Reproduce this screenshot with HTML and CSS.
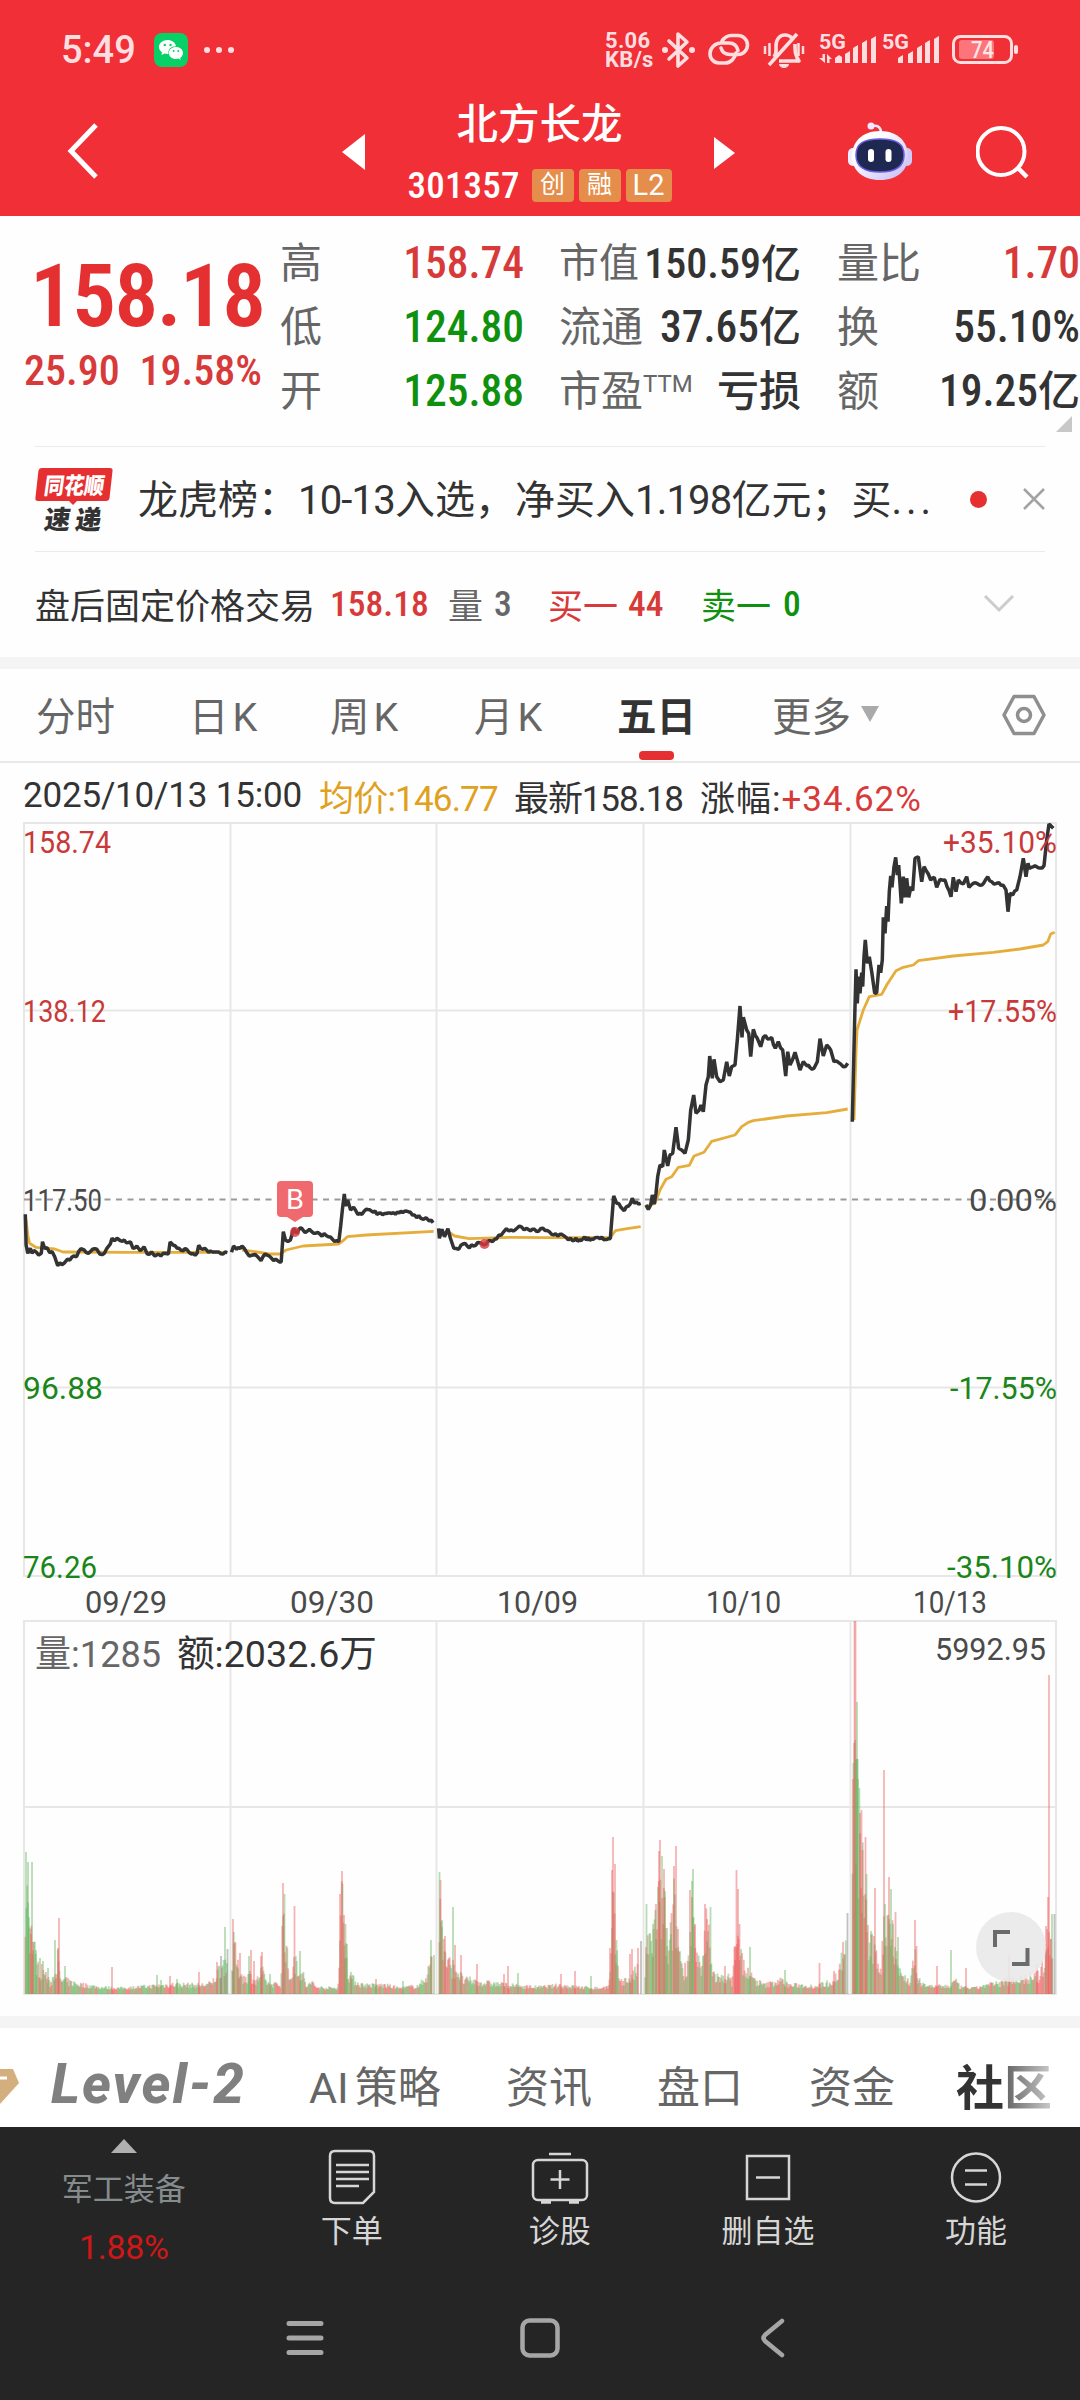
FILE: index.html
```html
<!DOCTYPE html>
<html lang="zh-CN">
<head>
<meta charset="utf-8">
<title>北方长龙 301357</title>
<link rel="stylesheet" href="styles.css">
</head>
<body>
<header class="header">
  <div class="status">
    <span class="clock">5:49</span>
    <svg class="wechat" width="34" height="34" viewBox="0 0 34 34"><rect width="34" height="34" rx="8" fill="#07d067"/><path d="M13.500 7C8.800 7 5 10 5 14c0 2.200 1.200 4 3 5.300L7.500 22l3-1.500c1 .3 2 .4 3 .4h1C13.600 16 17.500 13 22 13.200 21.300 9.500 17.800 7 13.500 7z" fill="#fff"/><path d="M22 14c-4 0-7.200 2.600-7.200 6s3.200 6 7.200 6c.8 0 1.700-.1 2.400-.4l2.300 1.300-.6-2c1.800-1.100 2.900-2.900 2.900-4.900 0-3.400-3.100-6-7-6z" fill="#fff"/><g fill="#07d067"><circle cx="10.800" cy="12" r="1.200"/><circle cx="16.500" cy="12" r="1.200"/><circle cx="19.700" cy="18" r="1"/><circle cx="24.300" cy="18" r="1"/></g></svg>
    <svg class="dots" width="30" height="6" viewBox="0 0 30 6"><g fill="#ffe0e2"><circle cx="3" cy="3" r="3"/><circle cx="15" cy="3" r="3"/><circle cx="27" cy="3" r="3"/></g></svg>
    <div class="speed"><span>5.06</span><span>KB/s</span></div>
    <svg class="status-icons" width="364" height="40" viewBox="658 30 364 40" fill="none" stroke="#ffdee0" stroke-width="3.600">
      <path d="M670 41l18 17-9 8V34l9 8-18 17" stroke-linejoin="round" stroke-linecap="round"/>
      <g fill="#ffdee0" stroke="none"><circle cx="666" cy="50" r="3"/><circle cx="693" cy="50" r="3"/></g>
      <path d="M722 43h8c6 0 8 3 9 7.500M737 53c-1 5-5 10-11 10h-6c-5 0-9-4-9-9.500S716 43 722 43M723 41c2-3 6-5.500 9-5.500h7c5 0 9.500 4 9.500 9.500s-4.500 9.500-9.500 9.500h-8c-5 0-8-3-9-6.500" stroke-linecap="round"/>
      <path d="M770 65l28-31M775 57c3-4 2-6 2-11 0-7 4-11 9-11 3 0 5 1 7 3M796 44c0 7 0 11 4 17h-20" stroke-linejoin="round"/>
      <path d="M780 64h10a5 4 0 0 1-10 0z" fill="#ffdee0" stroke="none"/>
      <path d="M766 46v8M770.500 43v13M799.500 43v13M804 46v8" stroke-width="2.500"/>
      <g fill="#ffdee0" stroke="none">
        <path d="M836 63v-5l4-3 3 2v6zM846 54l5-3v12h-5zM854 48l5-3v18h-5zM863 43l5-3v23h-5zM872 39l5-3v27h-5z"/>
        <path d="M899 63v-5l5-3v8zM909 54l5-3v12h-5zM918 48l5-3v18h-5zM926 43l5-3v23h-5zM935 39l5-3v27h-5z"/>
        <path d="M823.500 54h2.500v9l-6-5h3.500zM828 54l5 5h-2.500v4H828z"/>
        <text x="820" y="49" class="net" textLength="27" lengthAdjust="spacingAndGlyphs">5G</text>
        <text x="883" y="49" class="net" textLength="27" lengthAdjust="spacingAndGlyphs">5G</text>
        <rect x="960" y="40" width="35" height="19" rx="3" fill="#ff8d92" fill-opacity=".75"/>
        <rect x="1015" y="45" width="4" height="9" rx="2"/>
        <text x="972" y="58" class="batt" textLength="23" lengthAdjust="spacingAndGlyphs">74</text>
      </g>
      <rect x="954.500" y="36.500" width="58" height="26" rx="7" stroke-width="3"/>
    </svg>
  </div>
  <div class="titlebar">
    <svg class="back" width="32" height="58" viewBox="0 0 32 58"><path d="M29 3L4 29l25 26" fill="none" stroke="#fff" stroke-width="5"/></svg>
    <svg class="prev" width="23" height="36" viewBox="0 0 23 36"><path d="M23 0v36L0 18z" fill="#fff"/></svg>
    <div class="stock">
      <h1>北方长龙</h1>
      <div class="code"><span class="digits">301357</span><i class="tag">创</i><i class="tag">融</i><i class="tag wide">L2</i></div>
    </div>
    <svg class="next" width="21" height="32" viewBox="0 0 21 32"><path d="M0 0v32l21-16z" fill="#fff"/></svg>
    <svg class="robot" width="64" height="60" viewBox="0 0 64 60">
      <defs><linearGradient id="shell" x1="0" y1="0" x2="1" y2="1"><stop offset=".3" stop-color="#fff"/><stop offset="1" stop-color="#c3b8f4"/></linearGradient></defs>
      <path d="M24 4c6-1 9 1 9 7" fill="none" stroke="#ece8ff" stroke-width="2.500"/><circle cx="23" cy="4" r="3.500" fill="#efeaff"/>
      <rect x="0" y="26" width="10" height="18" rx="5" fill="#efedff"/><rect x="54" y="26" width="10" height="18" rx="5" fill="#d0c9fa"/>
      <path d="M32 9c18 0 28 11 28 25S50 58 32 58 4 48 4 34 14 9 32 9z" fill="url(#shell)"/>
      <path d="M32 17c17 0 24 5 24 16s-7 17-24 17S8 44 8 33s7-16 24-16z" fill="#1e2850" stroke="#6a5ce0" stroke-width="1.500"/>
      <rect x="20" y="27" width="6" height="13" rx="3" fill="#fff"/><rect x="37.500" y="27" width="6" height="13" rx="3" fill="#fff"/>
    </svg>
    <svg class="search" width="54" height="54" viewBox="0 0 54 54"><circle cx="25" cy="25.500" r="23.500" fill="none" stroke="#fff" stroke-width="4"/><path d="M42 42l9 9" stroke="#fff" stroke-width="4.500"/></svg>
  </div>
</header>

<section class="quote">
  <div class="price">
    <strong>158.18</strong>
    <div class="change"><span>25.90</span><span>19.58%</span></div>
  </div>
  <dl class="stats first">
    <dt>高</dt><dd class="up">158.74</dd>
    <dt>低</dt><dd class="down">124.80</dd>
    <dt>开</dt><dd class="down">125.88</dd>
  </dl>
  <dl class="stats second">
    <dt class="small">市值</dt><dd class="small">150.59<b>亿</b></dd>
    <dt>流通</dt><dd>37.65<b>亿</b></dd>
    <dt>市盈<sup>TTM</sup></dt><dd><b>亏损</b></dd>
  </dl>
  <dl class="stats third">
    <dt>量比</dt><dd class="up">1.70</dd>
    <dt>换</dt><dd>55.10%</dd>
    <dt>额</dt><dd>19.25<b>亿</b></dd>
  </dl>
  <i class="corner"></i>
</section>

<section class="news">
  <svg class="logo" width="78" height="65" viewBox="0 0 78 65">
    <path d="M7 1h68q3 0 2.500 3l-3 27q-.5 3-3.500 3H42l-4 4-4-4H3q-3 0-2.600-3l3-27Q4 1 7 1z" fill="#e52f31"/>
    <g transform="skewX(-8)"><text x="12" y="27" class="logo-top" textLength="60" lengthAdjust="spacingAndGlyphs">同花顺</text>
    <text x="17" y="62" class="logo-bottom" textLength="57" lengthAdjust="spacing">速递</text></g>
  </svg>
  <p>龙虎榜：<span>10-13</span>入选，净买入<span>1.198</span>亿元；买<span class="more-dots">...</span></p>
  <i class="dot"></i>
  <svg class="close" width="22" height="22" viewBox="0 0 22 22"><path d="M1 1l20 20M21 1L1 21" stroke="#a3a3a3" stroke-width="2.500"/></svg>
</section>

<section class="fixed-price">
  <span class="label">盘后固定价格交易</span><span class="n up a">158.18</span>
  <span class="gray b">量</span><span class="n gray c">3</span>
  <span class="up d">买一</span><span class="n up e">44</span>
  <span class="down f">卖一</span><span class="n down g">0</span>
  <svg class="chev" width="32" height="18" viewBox="0 0 32 18"><path d="M2 1l14 14L30 1" fill="none" stroke="#ccc" stroke-width="3"/></svg>
</section>

<nav class="periods">
  <span class="p1">分时</span><span class="p2">日<em>K</em></span><span class="p3">周<em>K</em></span><span class="p4">月<em>K</em></span><span class="p5 active">五日</span><span class="p6">更多</span><i class="caret"></i>
  <svg class="gear" width="44" height="42" viewBox="0 0 44 42" fill="none" stroke="#8f8f8f" stroke-width="3.500"><path d="M12 2.500h20L42 21 32 39.500H12L2 21z" stroke-linejoin="round"/><circle cx="22" cy="21" r="6.500"/></svg>
</nav>

<section class="chart-info">
  <span class="i1">2025/10/13 15:00</span><span class="i2">均价:146.77</span><span class="i3">最新158.18</span><span class="i4">涨幅:<em>+34.62%</em></span>
</section>

<section class="charts">
  <svg id="chart" width="1080" height="1195" viewBox="0 821 1080 1195">
    <g class="grid" id="grid"></g>
    <path d="M24 1199.500H1055" stroke="#999" stroke-width="2" stroke-dasharray="6 5.500"/>
    <g id="volume"></g>
    <g id="lines"></g>
    <circle cx="295" cy="1232" r="5" fill="#d93840" fill-opacity=".8"/><circle cx="484.500" cy="1244" r="5" fill="#d93840" fill-opacity=".8"/>
    <path d="M281 1181h28q4 0 4 4v28q0 4-4 4h-6l-8 5-8-5h-6q-4 0-4-4v-28q0-4 4-4z" fill="#f0696e"/>
    <text x="286" y="1209" class="mark" textLength="18" lengthAdjust="spacingAndGlyphs">B</text>
    <g class="axis" id="axis"></g>
    <text x="35" y="1667" class="vol muted" textLength="126" lengthAdjust="spacingAndGlyphs">量:1285</text>
    <text x="177" y="1667" class="vol" textLength="200" lengthAdjust="spacingAndGlyphs">额:2032.6万</text>
    <circle cx="1011" cy="1947" r="35" fill="#e9e9e9" fill-opacity=".9"/>
    <path d="M995 1947v-15h15M1012 1964h15.500v-16" fill="none" stroke="#6b6b6b" stroke-width="4"/>
  </svg>
</section>

<nav class="sections">
  <svg class="gem" width="20" height="36" viewBox="0 0 20 36"><path d="M0 1h13l6 14L0 36z" fill="#d4af7e"/><path d="M0 10h7" stroke="#fff" stroke-width="3"/></svg>
  <span class="level">Level-2</span><span class="s1">AI<b>策略</b></span><span class="s2">资讯</span><span class="s3">盘口</span><span class="s4">资金</span><span class="s5">社区</span>
</nav>

<footer class="toolbar">
  <div class="sector"><i class="tri"></i><span>军工装备</span><em>1.88%</em></div>
  <div class="tool"><svg width="60" height="58" viewBox="0 0 60 58" fill="none" stroke="#d6d6d6" stroke-width="2.500"><path d="M13 3h34q5 0 5 5v36L41 55H13q-5 0-5-5V8q0-5 5-5z"/><path d="M14 17h33M14 24h33M14 31h33M14 38h23"/></svg><span>下单</span></div>
  <div class="tool"><svg width="60" height="58" viewBox="0 0 60 58" fill="none" stroke="#d6d6d6" stroke-width="2.500"><rect x="3" y="12" width="54" height="40" rx="5"/><path d="M19 6h22M30 22v19M20.500 31.500h19"/><path d="M11 54h10M39 54h10" stroke-width="3.500"/></svg><span>诊股</span></div>
  <div class="tool"><svg width="60" height="58" viewBox="0 0 60 58" fill="none" stroke="#d6d6d6" stroke-width="2.500"><path d="M9 8h42v43H9zM18 29.500h24"/></svg><span>删自选</span></div>
  <div class="tool"><svg width="60" height="58" viewBox="0 0 60 58" fill="none" stroke="#d6d6d6" stroke-width="2.500"><circle cx="30" cy="29.500" r="24"/><path d="M19 22.500h22M19 36.500h22"/></svg><span>功能</span></div>
</footer>
<div class="sysnav">
  <svg class="menu" width="38" height="36" viewBox="0 0 38 36"><path d="M3 3.500h32M3 18h32M3 32.500h32" stroke="#a6a6a6" stroke-width="5" stroke-linecap="round"/></svg>
  <svg class="home" width="40" height="40" viewBox="0 0 40 40"><rect x="2.500" y="2.500" width="35" height="35" rx="7" fill="none" stroke="#a6a6a6" stroke-width="4.500"/></svg>
  <svg class="ret" width="26" height="40" viewBox="0 0 26 40"><path d="M22 3L5 17q-3 3 0 6l17 14" fill="none" stroke="#a6a6a6" stroke-width="4.500" stroke-linecap="round"/></svg>
</div>
<script src="chart.js"></script>
</body>
</html>
```
FILE: styles.css
```css
* { box-sizing: border-box; margin: 0; padding: 0; }
body { width: 1080px; height: 2400px; overflow: hidden; background: #fefefe; color: #333; font-family: Roboto, "Noto Sans CJK SC", sans-serif; }
i, em { font-style: normal; }
svg { display: block; flex: none; }
span { white-space: nowrap; }
.up { color: #d83a3a; }
.down { color: #0f910f; }
.gray { color: #666; }

.header { height: 216px; background: #f12f37; }
.status { display: flex; align-items: center; height: 100px; padding-left: 61px; color: #ffdee0; }
.clock { width: 93px; font-size: 38px; font-weight: 500; font-stretch: 95%; }
.dots { margin-left: 16px; }
.speed { display: flex; flex-direction: column; width: 52px; margin-left: 371px; font-size: 22px; font-weight: 700; line-height: 19px; letter-spacing: .3px; }
.net { font-size: 21px; font-weight: 700; }
.batt { font-size: 24px; font-weight: 500; fill: #ffe6e8; }
.titlebar { display: flex; align-items: flex-start; height: 116px; padding-left: 67px; color: #fff; }
.back { margin-top: 22px; }
.prev { margin: 34px 0 0 243px; }
.stock { width: 349px; text-align: center; }
.stock h1 { font-size: 41.500px; font-weight: 500; line-height: 50px; }
.code { display: flex; justify-content: center; align-items: center; height: 34px; margin-top: 18px; }
.digits { width: 124px; text-align: left; font-size: 37px; font-weight: 500; font-stretch: 78%; letter-spacing: .2px; }
.tag { width: 42px; height: 33px; margin-right: 5px; border-radius: 4px; background: #e58e4b; font-size: 25px; line-height: 32px; }
.tag.wide { width: 46px; margin-right: 0; font-size: 29px; }
.next { margin-top: 37px; }
.robot { margin: 22px 0 0 113px; }
.search { margin: 26px 0 0 64px; }

.quote { position: relative; display: flex; height: 230px; padding-top: 16px; }
.price { width: 280px; color: #e53032; }
.price strong { display: block; height: 100px; margin: 4px 0 0 30px; font-size: 87px; font-weight: 600; line-height: 120px; font-stretch: 82%; letter-spacing: -1.500px; }
.change { display: flex; justify-content: space-between; width: 238px; margin-left: 24px; color: #d83a3a; font-size: 42px; font-weight: 500; font-stretch: 82%; line-height: 70px; }
.stats { display: grid; grid-template-columns: 0 1fr; grid-auto-rows: 64px; line-height: 64px; font-size: 42px; }
.stats dt { color: #666; white-space: nowrap; }
.stats dd { text-align: right; font-size: 43.500px; font-weight: 500; font-stretch: 86%; white-space: nowrap; }
.stats b { font-size: 42px; font-weight: 500; }
.stats sup { font-size: 24px; line-height: 0; vertical-align: 14px; }
.stats dt.small, .stats .small b { font-size: 40px; }
.stats dd.small { font-size: 42px; }
.first { width: 244px; }
.second { width: 242px; margin-left: 35px; }
.third { width: 243px; margin-left: 36px; }
.corner { position: absolute; left: 1056px; top: 200px; width: 0; height: 0; border: 8px solid transparent; border-right-color: #c8c8c8; border-bottom-color: #c8c8c8; }

.news { display: flex; align-items: center; height: 106px; margin: 0 35px; border: solid #ebebeb; border-width: 1px 0; font-size: 40px; }
.news p { width: 806px; margin-left: 25px; padding-bottom: 5px; white-space: nowrap; }
.news p span { letter-spacing: -.8px; }
.news .more-dots { letter-spacing: 4px; }
.logo { overflow: visible; }
.logo-top { font-size: 23px; font-weight: 900; fill: #fff; }
.logo-bottom { font-size: 26px; font-weight: 900; fill: #333; }
.dot { width: 17px; height: 17px; border-radius: 50%; background: #e52f31; margin-left: 26px; }
.close { margin-left: 36px; }

.fixed-price { display: flex; align-items: center; height: 105px; padding: 0 0 2px 35px; font-size: 35px; }
.fixed-price .n { font-size: 35.500px; font-weight: 500; font-stretch: 83%; }
.fixed-price .label { width: 295px; }
.fixed-price .a { width: 118px; } .fixed-price .b { width: 46px; } .fixed-price .c { width: 54px; }
.fixed-price .d { width: 80px; } .fixed-price .e { width: 73px; } .fixed-price .f { width: 82px; } .fixed-price .g { width: 200px; }

.periods { display: flex; align-items: center; height: 106px; padding: 0 0 3px 36px; border-top: 12px solid #f4f4f4; border-bottom: 2px solid #e8e8e8; color: #666; font-size: 39.500px; }
.periods em { margin-left: 4px; }
.p1 { width: 153px; } .p2 { width: 141px; } .p3 { width: 144px; } .p4 { width: 143px; } .p5 { width: 155px; } .p6 { width: 89px; }
.active { position: relative; color: #333; font-weight: 700; }
.active::after { content: ""; position: absolute; left: 22px; bottom: -18px; width: 35px; height: 9px; border-radius: 4px; background: #e52f31; }
.caret { border: 9px solid transparent; border-top: 16px solid #aaa; border-bottom: 0; }
.gear { margin: 3px 0 0 123px; }

.chart-info { display: flex; align-items: center; height: 58px; padding: 6px 0 0 23px; font-size: 35px; }
.i1 { width: 296px; letter-spacing: -.2px; } .i2 { width: 195px; color: #e0a020; letter-spacing: -.8px; } .i3 { width: 186px; letter-spacing: -1.100px; }
.i4 { letter-spacing: 1px; }
.i4 em { color: #d83a3a; }

.charts { height: 1195px; border-bottom: 0; }
.grid { fill: none; stroke: #e7e7e7; stroke-width: 2; }
.axis, .vol { font-size: 32px; fill: #4a4a4a; }
.vol { font-size: 37px; fill: #333; }
.vol.muted { fill: #666; }
.mark { font-size: 28px; fill: #fff; }
.axis .red { fill: #c83a3a; }
.axis .green { fill: #1a861a; }

.sections { display: flex; align-items: center; height: 111px; border-top: 12px solid #f4f4f4; padding-top: 12px; color: #666; font-size: 43px; background: #fff; }
.sections b { font-weight: 400; margin-left: 6px; }
.gem { margin-top: 4px; }
.level { width: 258px; margin-left: 31px; color: #808080; font-size: 55px; font-weight: 800; font-style: italic; letter-spacing: 2px; }
.s1 { width: 197px; } .s2 { width: 151px; } .s3 { width: 152px; } .s4 { width: 147px; }
.s5 { font-size: 48px; font-weight: 700; background: linear-gradient(90deg, #333 50%, #666 52%, #ccc 100%); background-clip: text; color: transparent; }

.toolbar { display: flex; height: 160px; background: #252525; color: #d6d6d6; font-size: 31px; }
.sector { display: flex; flex-direction: column; align-items: center; width: 248px; padding-top: 12px; color: #858c8e; }
.sector em { margin-top: 16px; font-size: 34px; line-height: 36px; color: #cf1717; letter-spacing: -.3px; }
.sector span { margin-top: 14px; line-height: 46px; }
.tri { border: 13px solid transparent; border-bottom: 14px solid #b0b0b0; border-top: 0; }
.tool { display: flex; flex-direction: column; align-items: center; width: 208.300px; padding-top: 21px; }
.tool span { line-height: 52px; }
.sysnav { display: flex; align-items: center; height: 113px; padding: 0 0 11px 286px; background: #252525; }
.home { margin-left: 196px; }
.ret { margin-left: 200px; }
```
FILE: chart.js
```js
const NS = 'http://www.w3.org/2000/svg';
function add(parent, tag, attrs, text) {
  const el = document.createElementNS(NS, tag);
  for (const k in attrs) el.setAttribute(k, attrs[k]);
  if (text) el.textContent = text;
  document.getElementById(parent).appendChild(el);
}

// grid
add('grid', 'path', { d: 'M24 823H1056V1576H24zM24 1010.5H1056M24 1387.5H1056M230.5 823V1576M436.500 823V1576M643.500 823V1576M850.500 823V1576' });
add('grid', 'path', { d: 'M24 1621H1056V1994H24zM24 1807H1056M230.500 1621V1994M436.500 1621V1994M643.500 1621V1994M850.500 1621V1994' });

// axis labels: x, baseline, width, text, class
[
  [23, 853, 88, '158.74', 'red'], [23, 1022, 83, '138.12', 'red'], [23, 1211, 79, '117.50', ''],
  [23, 1399, 80, '96.88', 'green'], [23, 1578, 74, '76.26', 'green'],
  [943, 853, 114, '+35.10%', 'red'], [948, 1022, 109, '+17.55%', 'red'], [969, 1211, 88, '0.00%', ''],
  [950, 1399, 107, '-17.55%', 'green'], [947, 1578, 110, '-35.10%', 'green'],
  [85, 1613, 82, '09/29', ''], [290, 1613, 84, '09/30', ''], [497, 1613, 81, '10/09', ''],
  [706, 1613, 75, '10/10', ''], [913, 1613, 74, '10/13', ''], [935, 1660, 111, '5992.95', '']
].forEach(([x, y, w, t, c]) => add('axis', 'text', { x, y, class: c, textLength: w, lengthAdjust: 'spacingAndGlyphs' }, t));

let seed = 7;
const rnd = () => (seed = (seed * 16807) % 2147483647) / 2147483647;

// price and average lines; the first three days share one scale, the last two another
const A = p => [p[0] / 2.3757, 1120 + p[1] / 3];
const B = p => [620 + p[0] / 3, 800 + p[1] / 3];
function pairs(s) { const n = s.split(/[ ,]+/).map(Number), r = []; for (let i = 0; i < n.length; i += 2) r.push([n[i], n[i + 1]]); return r; }
const avg = [
  [A, '62,300 66,345 70,370 85,382 130,387 150,396 300,397 540,397'],
  [A, '575,390 600,394 640,402 665,402 680,390 700,384 720,378 805,372 815,362 825,350 870,345 1030,334'],
  [A, '1065,335 1080,348 1115,356 1220,352 1300,353 1450,353 1462,332 1490,326 1522,320'],
  [B, '78,1218 105,1210 120,1170 138,1138 155,1130 175,1102 208,1096 222,1068 252,1057 275,1024 345,1005 365,980 385,967 400,962 500,948 620,938 683,927'],
  [B, '702,960 708,760 711,690 730,630 748,590 785,583 800,555 828,512 850,502 880,495 895,482 1000,468 1120,457 1200,447 1270,435 1283,425 1292,402 1304,397']
];
const price = [
  [A, '60,283 62,375 66,400 72,385 76,400 85,395 92,405 98,400 101,365 106,385 112,383 118,398 124,395 130,410 137,437 142,428 152,430 160,418 166,420 175,408 182,410 192,386 200,390 210,400 220,388 230,388 237,402 248,400 254,385 262,372 266,355 272,362 278,355 286,362 295,360 300,368 310,366 316,385 325,378 333,392 342,380 350,402 360,396 368,408 376,402 382,408 392,400 400,402 404,366 412,376 425,385 435,392 445,390 455,402 468,400 472,376 482,388 500,393 520,396 540,398'],
  [A, '550,397 555,378 562,388 575,378 585,395 592,408 600,405 612,410 620,422 630,402 645,415 655,418 668,426 673,335 678,360 690,360 698,325 705,340 712,325 725,338 735,328 745,340 760,342 780,350 800,362 805,365 818,222 821,258 826,240 833,270 840,262 850,283 860,283 870,268 900,280 935,278 970,275 985,285 1000,295 1012,293 1020,303 1029,308'],
  [A, '1042,325 1044,355 1050,328 1056,350 1064,326 1070,355 1078,385 1090,388 1100,372 1110,378 1125,378 1140,368 1150,375 1165,362 1175,358 1185,345 1195,338 1203,326 1215,330 1228,325 1234,318 1245,330 1260,332 1275,335 1290,325 1305,335 1315,345 1330,343 1345,352 1360,362 1385,356 1450,356 1458,228 1465,250 1475,262 1483,272 1493,258 1502,235 1507,250 1522,250'],
  [B, '78,1215 85,1228 92,1215 97,1185 103,1212 108,1180 113,1130 120,1095 128,1100 133,1050 143,1098 150,1065 158,1060 168,982 176,1045 185,1050 195,1060 205,1020 212,930 221,885 228,940 238,930 243,915 250,935 258,855 265,830 269,768 277,835 282,778 290,830 300,845 310,840 320,785 328,828 335,800 345,795 352,720 360,618 366,712 370,652 380,690 386,700 392,770 400,688 412,715 422,740 430,712 455,712 466,745 475,725 488,750 497,828 503,755 510,795 525,757 540,810 550,785 560,797 582,805 592,785 600,716 610,768 620,735 632,750 642,785 655,787 670,800 683,790'],
  [B, '697,965 704,655 708,508 712,610 716,530 720,580 725,518 728,560 732,470 736,420 742,490 748,470 755,515 764,580 770,578 777,495 782,518 787,480 790,352 795,400 800,318 804,365 808,275 812,228 816,262 822,200 827,172 832,225 836,195 844,310 850,230 855,292 860,235 866,292 873,260 878,272 885,175 895,170 905,245 912,200 925,222 932,240 943,232 950,262 960,238 975,240 993,290 1000,232 1008,275 1015,240 1030,252 1040,230 1047,262 1060,250 1080,256 1103,230 1115,245 1130,250 1150,256 1158,270 1164,335 1170,280 1178,285 1190,270 1200,230 1210,175 1218,230 1224,190 1228,205 1245,197 1255,203 1272,197 1280,120 1287,72 1300,85']
];
const line = (pts, color, w) => add('lines', 'path', { d: 'M' + pts.map(p => p.map(v => v.toFixed(1)).join(' ')).join('L'), fill: 'none', stroke: color, 'stroke-width': w, 'stroke-linejoin': 'bevel' });
avg.forEach(([f, s]) => line(pairs(s).map(f), '#e5ae3c', 2.8));
price.forEach(([f, s]) => {
  const src = pairs(s).map(f), out = [src[0]];
  for (let i = 1; i < src.length; i++) {
    const [x0, y0] = src[i - 1], [x1, y1] = src[i], n = Math.floor((x1 - x0) / 1.7);
    for (let k = 1; k < n; k++) out.push([x0 + (x1 - x0) * k / n, y0 + (y1 - y0) * k / n + (rnd() - .5) * 4]);
    out.push(src[i]);
  }
  line(out, '#333', 3.5);
});

// minute volume: envelope of x,height pairs, then single peaks as x:height with r/g/k colour
const volume = [
  ['25,30 26,140 29,80 33,50 38,25 45,20 50,8 53,15 58,35 60,12 65,12 70,10 80,8 100,5 120,4 150,6 175,8 200,7 212,9 220,25 227,35',
   '26:142g 28:132g 32:132g 29:77g 31:60r 33:52r 36:44g 40:36g 43:33g 48:26g 55:54g 58:46r 59:76r 65:28g 112:27r 157:19g 161:14g 170:18r 177:15g 199:22r 217:32r 221:38k 225:67g 227.5:45k'],
  ['232,20 234,50 238,25 240,22 244,14 250,18 256,10 262,22 265,12 270,8 281,8 283,90 286,50 289,15 292,20 296,35 299,22 303,18 306,6 312,10 316,5 338,4 340,60 342,100 345,60 348,20 352,14 360,8 370,7 385,7 400,4 420,7 428,20 432,40',
   '233:75r 234:50g 240:41r 249:38g 251:44r 254:33r 261:38r 262:42r 270:20g 283:111r 284.5:100g 294.500:88r 300:43g 340:100r 342:123r 344:79r 345.500:70g 347:50g 351:22g 376:15r 403:13g 431:54g 434:39g'],
  ['439,30 440,110 443,50 447,30 452,27 458,22 463,12 470,12 480,10 500,8 520,6 540,5 560,7 580,5 600,4 609,6 611,30 613,90 616,40 620,12 626,12 632,15 638,25',
   '439.500:122g 440.500:114r 442:74g 445:58r 453:87g 455:49r 461:39r 477:30r 504:20r 508:28r 518:21g 561:20r 575:23r 591:18g 610:46r 612:124r 613:157r 615:130r 616.500:54g 630:40r 632:45r 638:46r 641:53k'],
  ['645,20 647,50 652,50 658,90 664,90 668,30 674,90 678,50 684,20 689,40 692,90 696,35 702,20 706,70 709,60 713,20 720,12 726,18 732,10 736,60 740,40 746,22 755,12 765,7 780,12 790,7 805,7 815,6 830,10 838,18 843,40 846,45',
   '646.500:90g 653:70g 656:90r 659:143r 660:154r 662:138g 664:125r 665:103g 667:66g 671:60g 674:128r 676:148r 678:65r 690:104r 692:113g 693:125g 695:70r 705:90r 707:75r 710.500:87g 725:28r 735:48r 736.500:124r 738:105r 739.500:70r 750:47g 785:24g 819.500:31r 834:23r 843:52r 847.500:81k'],
  ['852,80 854,240 858,180 862,130 866,90 869,45 876,45 881,20 884,70 890,80 895,50 900,20 910,10 915,40 917,12 930,6 950,6 955,12 960,5 975,4 985,7 1000,9 1010,14 1025,14 1040,17 1045,35 1048,60 1050,50 1053,40',
   '853:215r 854.500:373r 855.500:373r 856:234g 857:292g 858:215g 860:181r 861.500:184r 862.500:144r 865.500:157r 866.500:120g 871:63g 875:106r 884:224r 885:90g 889:117r 891:105g 893:70g 895.500:82r 898:57g 915:74r 916.500:48r 937:28r 951:44g 966:26r 1009:38r 1037:30r 1046:68r 1048:97r 1049:319r 1051:55r 1052:80g 1054.500:80k']
];
const colors = { r: '#ea5a5a', g: '#5fb35a', k: '#777' };
const bar = (x, h, c) => add('volume', 'rect', { x: (x - .9).toFixed(2), y: (1994 - h).toFixed(1), width: 1.8, height: h.toFixed(1), fill: colors[c], 'fill-opacity': .45 });
volume.forEach(([env, peaks]) => {
  const e = pairs(env);
  for (let i = 1; i < e.length; i++) {
    const [x0, h0] = e[i - 1], [x1, h1] = e[i];
    for (let x = Math.ceil(x0 / .85) * .85; x < x1; x += .85) {
      const h = (h0 + (h1 - h0) * (x - x0) / (x1 - x0)) * (.5 + .8 * rnd()) + 2;
      bar(x, Math.min(h, 373), rnd() < .5 ? 'r' : 'g');
    }
  }
  peaks.split(' ').forEach(s => { const [x, h] = s.split(':'); bar(+x, parseFloat(h), h.slice(-1)); });
});
```
